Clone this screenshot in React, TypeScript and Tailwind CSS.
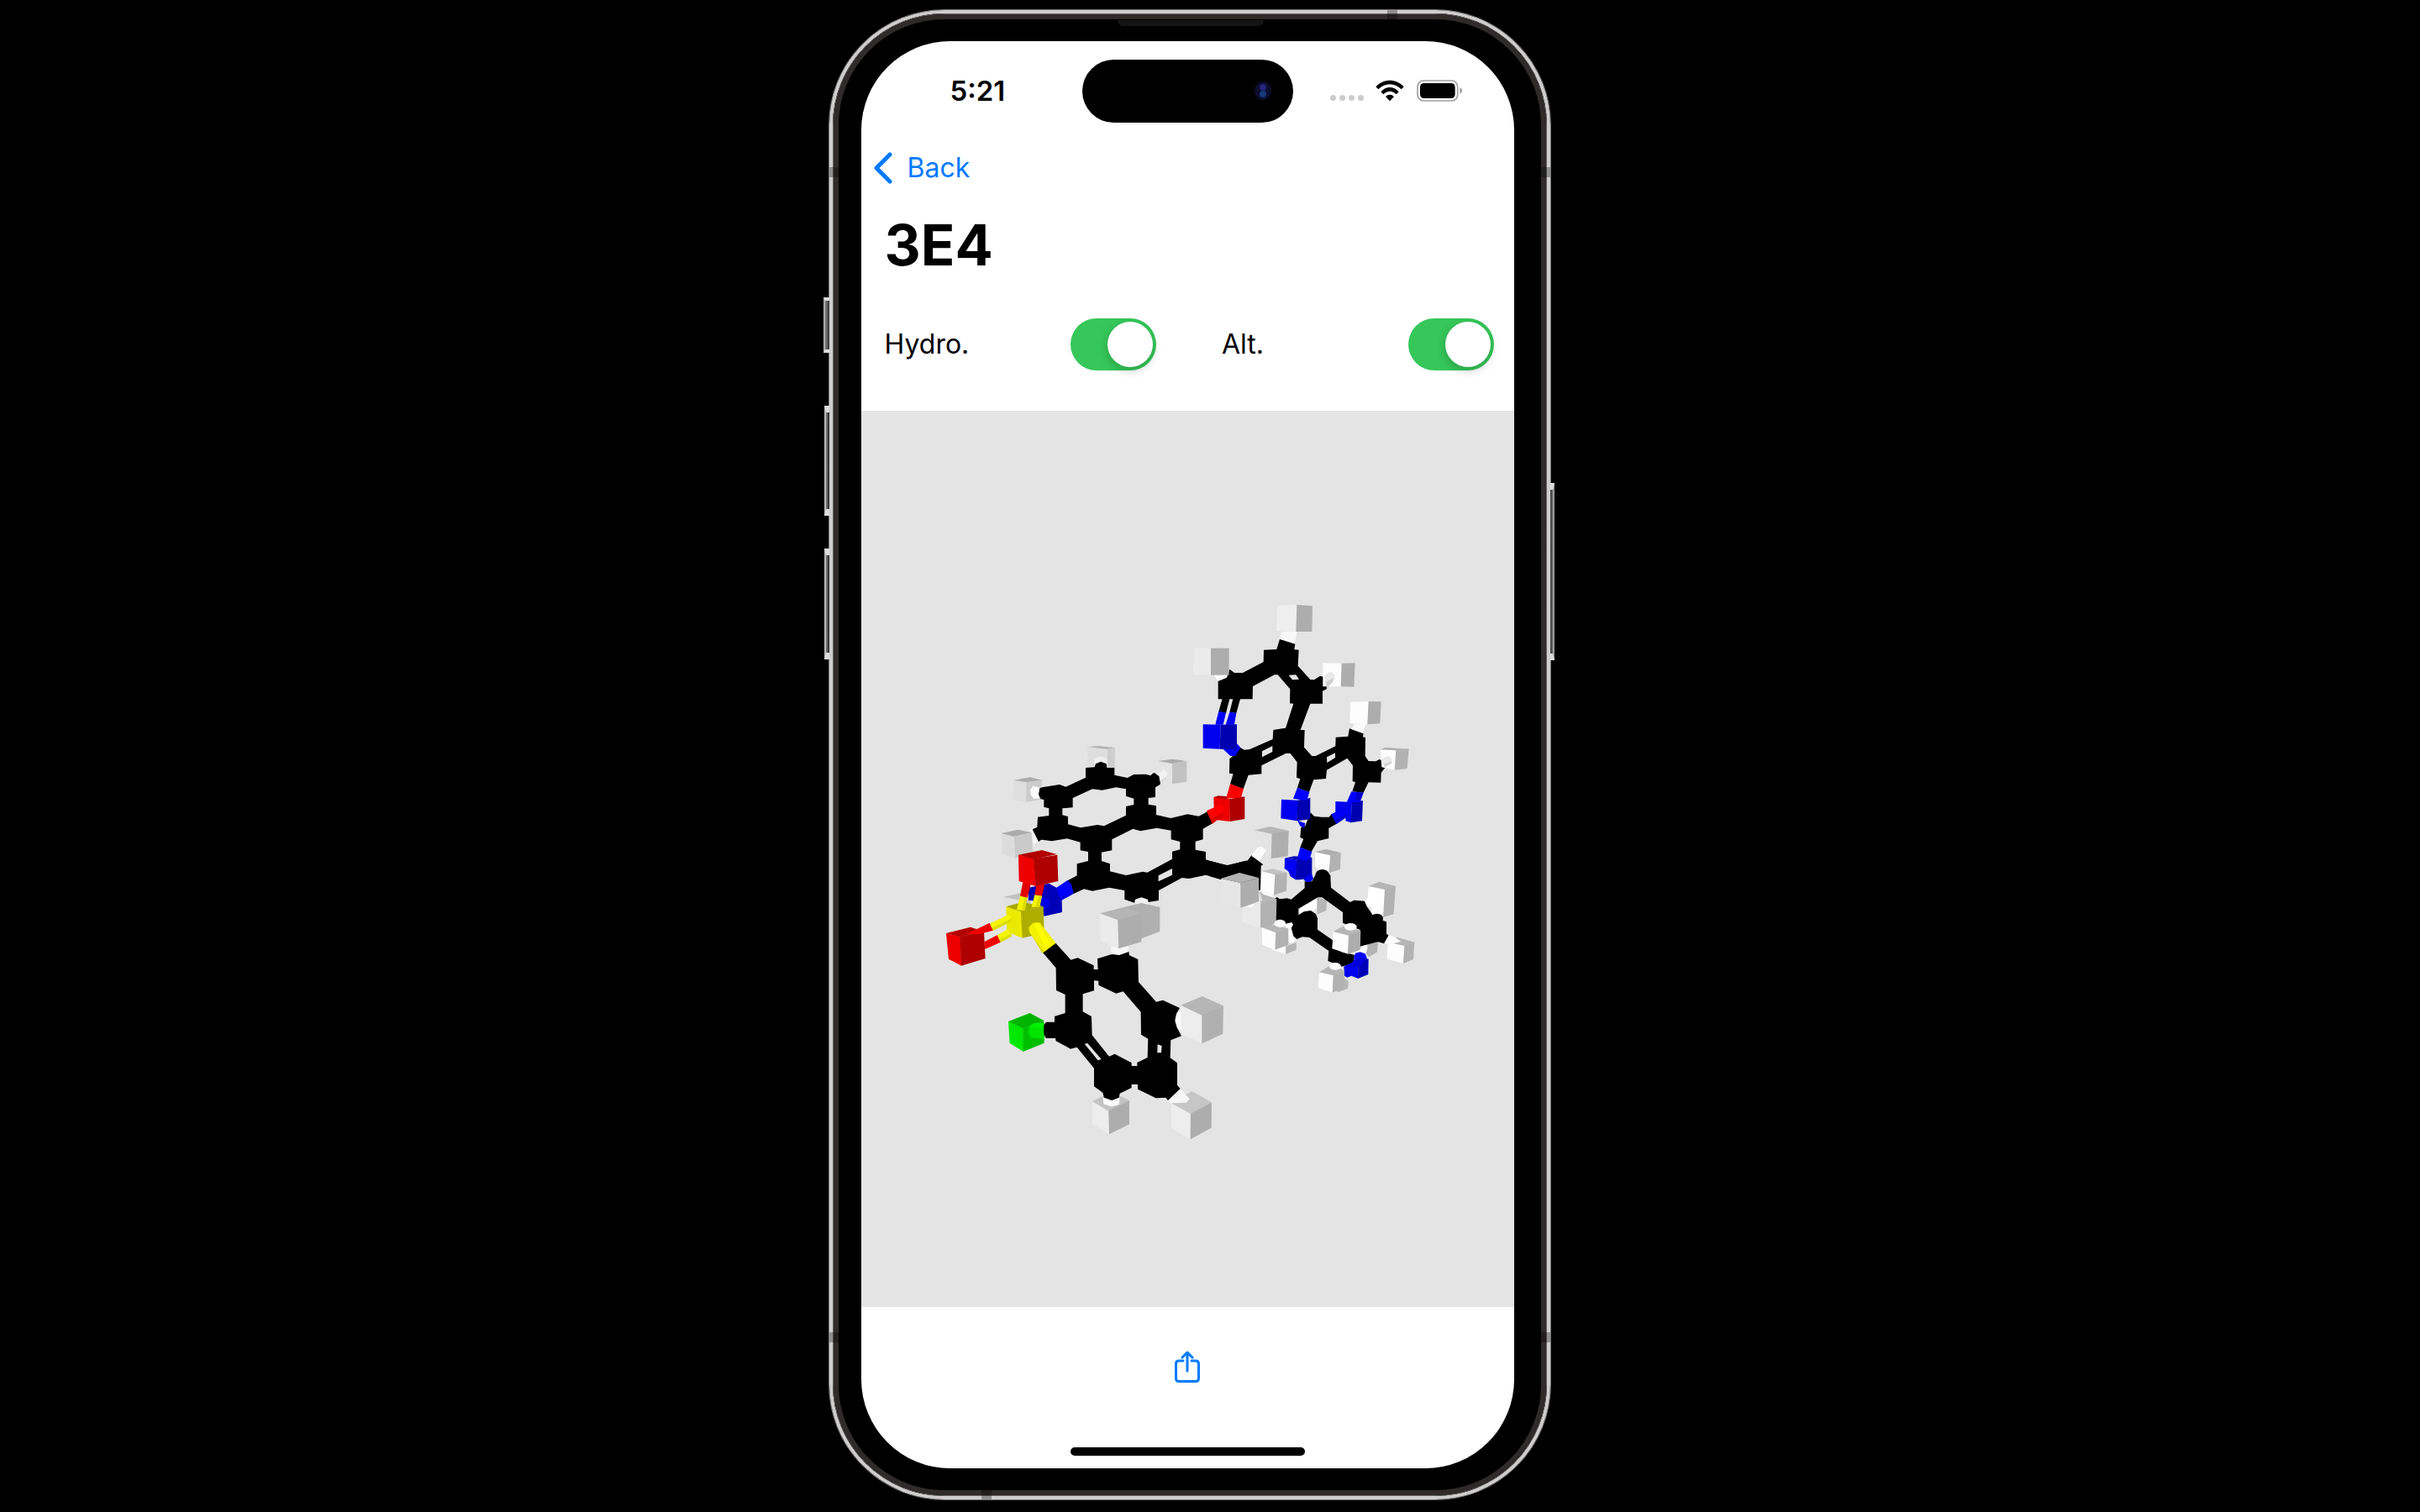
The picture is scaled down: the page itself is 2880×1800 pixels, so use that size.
import React from "react";

type Shape = [fill: string, points: string];
type Dot = [fill: string, cx: number, cy: number, rx: number, ry: number];

const K = "#000000";
const BG = "#e4e4e4";
const W = "#fbfbfb";

/* Pyridine and pyrimidine rings */
const upperRings: Shape[] = [
  ["#efefef", "360,64 432,60 427,156 357,154"],
  ["#adadad", "430,60 486,64 484,156 427,156"],
  ["#f8f8f8", "376,156 431,156 422,200 369,184"],
  [W, "133,310 190,290 188,320 165,334 145,328"],
  [K, "369,183 424,200 421,220 437,221 434,278 478,327 492,328 513,314 528,318 538,340 537,360 522,368 522,413 478,413 443,507 458,507 456,569 484,600 497,600 568,565 569,533 613,530 618,502 668,520 666,532 675,534 674,600 686,618 712,619 725,612 742,620 747,640 735,655 731,660 730,695 686,694 668,731 628,727 639,694 629,690 630,634 610,608 537,650 534,681 490,685 474,729 432,713 442,682 429,677 431,622 407,591 392,590 304,634 304,664 257,668 239,718 192,700 203,664 189,662 190,610 202,600 228,570 243,578 262,576 344,540 346,507 390,500 418,413 405,412 406,361 362,310 350,310 273,351 272,397 149,397 149,333 180,320 190,290 207,303 237,303 311,264 312,221 358,219"],
  [BG, "401,311 427,310 438,326 414,328"],
  [BG, "306,583 343,564 343,585 306,604"],
  [BG, "537,604 567,589 567,606 538,624"],
  [K, "164,396 190,396 177,447 151,441"],
  [K, "202,396 228,396 214,447 190,443"],
  ["#0000ff", "151,440 177,446 167,488 139,488"],
  ["#0000ff", "190,443 214,446 207,488 176,488"],
  ["#0000ff", "165,574 212,574 217,556 229,570 210,600 193,600"],
  ["#0000ee", "95,487 158,488 155,575 95,572"],
  ["#0000b0", "158,488 216,487 216,578 155,575"],
  ["#ebebeb", "62,215 124,215 124,311 59,309"],
  ["#adadad", "123,215 188,215 188,311 123,311"],
  ["#fcfcfc", "523,268 591,269 588,352 523,352"],
  ["#adadad", "590,269 638,268 634,353 587,352"],
  ["#e9e9e9", "526,316 545,300 558,302 566,312 560,332 538,360"],
  ["#cfcfcf", "533,336 563,320 560,332 538,358"],
  [W, "635,485 676,485 665,518 627,505"],
  ["#fdfdfd", "621,407 687,405 683,487 619,483"],
  ["#adadad", "686,405 731,406 727,484 682,487"],
  ["#fdfdfd", "729,577 785,578 780,650 733,640"],
  ["#adadad", "729,577 745,570 829,575 784,580"],
  ["#b2b2b2", "784,580 830,574 824,645 779,650"],
  ["#e9e9e9", "731,612 758,599 770,612 768,625 744,640"],
  ["#cfcfcf", "741,630 769,618 768,626 744,640"],
  ["#ee0000", "133,747 192,752 191,834 135,827"],
  ["#ae0000", "133,747 150,742 185,745 180,755"],
  ["#ff0000", "192,700 240,717 230,752 178,750"],
  ["#ae0000", "190,754 244,745 244,825 191,834"],
  ["#ff0000", "108,796 158,773 172,785 168,810 128,842"],
  ["#d80000", "123,826 170,800 168,812 128,842"],
  ["#0000ff", "571,843 553,808 600,785 612,815"],
  ["#0000ee", "375,755 433,758 431,832 373,823"],
  ["#0000b0", "432,758 478,750 478,826 430,832"],
  ["#0000ff", "432,713 475,729 466,760 417,752"],
  ["#0000ee", "568,762 627,765 624,838 604,832 606,800 568,806"],
  ["#0000b0", "627,762 666,760 663,832 623,838"],
  ["#0000ff", "625,727 668,731 656,765 608,766"],
  ["#0000c8", "645,730 668,731 656,758 638,758"],
  ["#0000d0", "565,830 606,806 608,818 571,843"],
];

/* Naphthalene core and the sulfonyl group */
const coreBack: Dot[] = [["#eeeeee", 390, 112, 24, 20]];
const coreShapesBack: Shape[] = [
  ["#dedede", "343,61 415,66 415,132 343,132"],
  ["#b2b2b2", "343,58 380,54 441,60 415,66"],
  ["#cecece", "414,65 441,60 440,135 414,135"],
];
const core: Shape[] = [
  [K, "336,132 368,130 372,118 390,110 410,118 412,132 439,132 439,158 485,168 508,156 550,155 568,160 580,150 600,162 602,192 585,200 585,237 560,240 560,263 588,268 588,300 640,312 700,298 740,305 772,288 790,330 755,350 755,388 728,395 728,425 765,432 765,460 840,482 905,465 905,530 820,530 765,515 705,528 680,525 597,570 597,606 520,618 475,602 475,570 420,560 360,572 330,565 293,582 272,535 305,517 305,475 345,465 345,432 317,427 317,398 270,385 215,394 170,388 168,395 145,352 163,345 165,308 205,303 205,277 187,272 187,245 172,240 172,205 190,200 243,192 265,200 336,167"],
  [BG, "290,240 360,208 395,212 445,202 480,208 480,233 508,242 508,264 480,270 480,302 402,340 378,336 318,346 273,334 273,306 253,301 253,277 290,274"],
  [BG, "430,388 505,350 532,358 590,347 641,356 641,388 673,396 673,424 645,431 645,458 556,506 540,503 480,516 423,502 423,475 393,465 393,434 430,427"],
  [BG, "596,517 645,492 645,515 596,538"],
  ["#dedede", "80,176 126,183 124,254 78,247"],
  ["#ababab", "80,176 138,166 180,176 125,184"],
  ["#cccccc", "125,183 180,176 178,245 123,254"],
  [W, "138,212 148,197 175,203 170,242 150,242 140,228"],
  [K, "172,205 190,200 190,246 176,244 168,228"],
  ["#dcdcdc", "35,366 81,377 86,455 38,440"],
  ["#ababab", "35,366 95,353 143,364 80,378"],
  ["#cacaca", "80,377 143,364 147,435 85,455"],
  ["#f4f4f4", "131,354 150,348 168,395 149,407 144,364"],
  [K, "146,352 165,345 190,380 168,396"],
  ["#e4e4e4", "595,110 646,116 646,190 600,184"],
  ["#ababab", "595,108 645,101 697,108 645,117"],
  ["#c2c2c2", "645,117 697,108 697,182 645,190"],
  ["#f2f2f2", "585,158 618,138 628,150 626,168 602,192"],
  ["#dcdcdc", "598,182 628,160 624,172 602,192"],
  [K, "568,160 580,150 598,162 603,190 585,202"],
  ["#c2c2c2", "42,593 110,578 140,590 140,630 60,625"],
  ["#e2e2e2", "42,593 100,605 100,625 56,626"],
  ["#0000b8", "132,560 205,545 232,560 250,565 252,648 188,662 170,610 132,605"],
  ["#0000ff", "232,560 272,533 285,548 293,580 247,607"],
  ["#0000e0", "247,595 290,572 293,582 247,607"],
  ["#0000e6", "178,595 196,597 208,608 205,628 188,636 178,628"],
  ["#e00000", "112,540 140,548 128,597 102,590"],
  ["#e00000", "160,553 190,546 180,590 154,586"],
  ["#ee0000", "96,443 151,457 159,555 98,537"],
  ["#b00000", "96,443 180,426 233,441 150,458"],
  ["#ae0000", "150,457 235,443 238,537 158,555"],
  ["#eaea00", "52,628 106,645 111,740 55,718"],
  ["#a8a800", "52,628 110,612 185,627 105,646"],
  ["#adad00", "105,645 185,627 188,722 110,740"],
  ["#f4f400", "102,590 128,596 118,642 90,640"],
  ["#dcdc00", "118,594 128,596 120,640 108,641"],
  ["#f4f400", "154,586 180,590 172,628 143,630"],
  ["#dcdc00", "168,588 180,590 172,628 158,630"],
];

/* Fluorophenyl ring */
const phenylBack: Dot[] = [[W, 885, 705, 20, 33]];
const phenyl: Shape[] = [
  ["#f4f400", "205,358 275,325 284,348 215,384"],
  ["#dddd00", "211,374 282,340 284,350 215,384"],
  ["#f4f400", "230,400 270,378 282,402 242,425"],
  ["#dddd00", "238,416 280,396 282,404 242,425"],
  ["#ee0000", "48,393 98,405 103,509 57,485"],
  ["#b40000", "48,393 135,371 183,387 97,406"],
  ["#ae0000", "97,405 183,387 188,483 102,509"],
  ["#f00000", "122,395 203,356 215,383 165,397"],
  ["#f00000", "184,424 230,400 242,425 187,450"],
  ["#ededed", "569,993 629,1027 630,1111 570,1075"],
  ["#c4c4c4", "569,993 640,960 702,990 628,1028"],
  ["#adadad", "628,1027 702,990 702,1075 630,1111"],
  [W, "608,980 668,980 665,1005 638,1012 610,1003"],
  ["#ededed", "852,1000 922,1037 920,1129 852,1088"],
  ["#c6c6c6", "852,1000 925,957 996,997 921,1038"],
  ["#adadad", "921,1037 996,997 995,1088 920,1129"],
  ["#f6f6f6", "840,990 880,945 918,985 905,998 850,1000"],
  [K, "437,426 493,488 518,481 575,508 575,522 590,522 588,484 632,470 640,468 665,471 700,458 702,472 733,486 735,567 798,638 822,632 882,660 870,680 865,705 872,730 888,760 850,775 848,838 873,856 873,935 884,948 840,990 832,980 797,982 732,950 732,933 710,933 710,945 668,965 665,980 640,990 612,980 607,962 576,940 576,875 515,800 492,806 440,778 438,768 405,768 393,750 393,725 405,710 435,710 435,690 473,678 473,612 441,597 440,517 393,462"],
  [BG, "576,562 592,563 592,578 655,608 680,601 743,674 744,755 769,770 767,837 730,855 730,867 710,867 710,856 650,824 630,833 569,757 567,690 536,673 536,610 576,598"],
  [BG, "542,788 553,786 602,843 590,847"],
  [BG, "803,790 818,795 816,820 802,820"],
  ["#f2f200", "343,372 358,356 382,355 440,428 392,464 345,388"],
  ["#fdfd00", "362,358 376,355 420,432 404,450"],
  ["#d6d600", "343,380 350,392 396,458 392,464"],
  ["#f6f6f6", "636,440 698,440 698,460 665,471 638,462"],
  ["#f0f0f0", "720,286 723,272 745,265 768,272 772,290 745,296"],
  ["#b0b0b0", "683,300 745,285 811,300 811,387 745,412"],
  ["#ebebeb", "597,322 662,345 665,448 598,420"],
  ["#b5b5b5", "597,322 683,300 747,322 661,346"],
  ["#adadad", "661,345 745,322 745,424 664,448"],
  ["#ededed", "886,650 962,685 961,787 886,750"],
  ["#b6b6b6", "886,650 962,618 1038,652 961,686"],
  ["#b0b0b0", "961,685 1038,652 1036,752 961,787"],
  ["#00e800", "270,708 323,732 324,816 275,785"],
  ["#00b400", "270,708 347,678 397,705 322,733"],
  ["#00be00", "322,732 397,705 398,785 323,816"],
  ["#00e400", "340,745 348,722 365,714 397,714 394,740 400,772 350,766"],
  ["#00f400", "346,726 364,714 397,714 394,732"],
];

/* Aminopiperidine ring and the methyl group */
const lowerBack: Shape[] = [
  ["#fdfdfd", "185,232 233,243 229,317 180,300"],
  ["#c2c2c2", "185,232 222,223 275,236 232,244"],
  ["#b2b2b2", "232,243 275,236 273,302 228,317"],
  [K, "0,195 62,210 135,193 148,175 190,208 182,212 180,300 170,300 0,250"],
  ["#e4e4e4", "158,85 222,97 219,186 155,172"],
  ["#b6b6b6", "158,85 215,72 281,87 221,98"],
  ["#aeaeae", "221,97 281,87 278,178 218,186"],
  [W, "148,177 168,148 182,143 196,152 200,160 187,202 176,196"],
  ["#e0e0e0", "176,194 198,162 200,168 187,202"],
  ["#ffffff", "315,375 335,352 360,345 372,328 384,330 383,362 360,378 350,372 330,387"],
  ["#b6b6b6", "382,325 417,335 415,372 382,386"],
  ["#fdfdfd", "525,520 560,488 572,530"],
  ["#b4b4b4", "562,488 600,487 597,520 568,538 556,524 562,510"],
  ["#fdfdfd", "222,512 236,500 270,490 271,528"],
  ["#b6b6b6", "270,500 308,485 308,512 270,528"],
  ["#fdfdfd", "375,163 431,174 426,238 376,215"],
  ["#adadad", "375,163 415,153 467,165 430,175"],
  ["#b2b2b2", "430,174 467,165 465,225 424,238"],
  ["#ffffff", "566,285 625,296 619,396 590,372 550,345 552,335 563,330"],
  ["#b6b6b6", "566,285 605,269 663,285 624,297"],
  ["#b2b2b2", "624,296 663,284 656,385 618,396"],
];
const lower: Shape[] = [
  [K, "359,22 372,35 398,38 425,38 435,26 452,62 424,78 424,114 384,124 362,162 322,146 334,116 322,111 325,75 340,70"],
  ["#0000e8", "312,50 340,60 336,78 322,70"],
  [K, "338,268 364,268 380,238 388,228 412,226 430,246 432,290 500,342 515,335 552,338 560,358 572,374 580,388 610,385 618,408 630,412 630,455 640,462 622,490 600,484 575,490 535,500 535,440 474,416 474,378 400,325 385,325 316,365 316,390 290,425 235,410 230,330 240,324 248,331 275,328 290,332 338,292"],
  [K, "316,388 335,376 360,372 378,385 384,400 384,440 436,476 470,520 515,530 514,560 470,572 421,552 424,516 355,468 330,466 310,474 292,458 290,420"],
  ["#0000ee", "267,185 311,190 306,262 287,250 280,232 266,222"],
  ["#0000b4", "267,185 300,178 364,182 364,255 320,262 305,262 310,190"],
  ["#0000ff", "322,146 364,162 356,188 335,194 312,184"],
  ["#0000f0", "334,262 345,248 364,242 369,258 360,269 345,270"],
  ["#fdfdfd", "635,485 695,497 691,561 632,545"],
  ["#b6b6b6", "635,485 668,467 730,485 694,498"],
  ["#b2b2b2", "694,497 730,484 726,546 690,561"],
  [W, "638,460 658,466 682,482 640,494 622,488"],
  ["#0000ee", "478,572 512,555 530,560 529,615 505,605 490,611 480,605"],
  ["#0000b8", "530,556 550,540 566,545 565,600 528,615"],
  ["#0000ff", "514,535 520,524 536,520 554,526 560,540 540,552 516,558"],
  ["#0000d8", "512,550 560,540 540,566 530,572 500,575"],
  ["#e6e6e6", "40,257 110,273 110,362 42,340"],
  ["#b2b2b2", "40,257 105,237 174,255 109,274"],
  ["#adadad", "109,273 174,255 174,340 109,362"],
  ["#eaeaea", "115,362 174,340 181,346 180,434 115,413"],
  ["#b2b2b2", "180,347 238,330 236,418 180,434"],
  ["#b8b8b8", "175,305 200,310 238,332 182,348"],
  [W, "176,298 196,304 222,316 228,326 190,314"],
  ["#e0e0e0", "172,308 180,312 188,338 178,336"],
  [W, "136,356 158,348 152,361 142,362"],
  ["#ffffff", "266,420 292,414 297,422 290,435 300,470 307,476 296,488 280,486"],
  ["#fdfdfd", "185,432 236,450 233,512 187,495"],
  ["#b6b6b6", "185,432 215,422 280,435 235,451"],
  ["#b2b2b2", "235,450 280,435 280,495 232,512"],
  ["#fdfdfd", "440,447 496,460 493,527 436,508"],
  ["#b6b6b6", "440,447 475,428 538,443 495,461"],
  ["#adadad", "495,460 538,443 536,512 492,527"],
  ["#b6b6b6", "478,612 495,625 492,650 460,663 445,658"],
  ["#fdfdfd", "390,592 441,603 438,665 386,648"],
  ["#b6b6b6", "390,592 430,568 480,585 440,604"],
  ["#b2b2b2", "440,603 480,585 477,648 437,665"],
];
const lowerDots: Dot[] = [
  [W, 598, 372, 22, 18],
  [K, 596, 400, 22, 17],
  [W, 404, 222, 20, 20],
  [K, 401, 243, 24, 18],
  [W, 250, 418, 20, 14],
  [W, 502, 430, 22, 13],
  [W, 447, 571, 21, 13],
  ["#0000ff", 285, 216, 14, 15],
];

function Shapes({ items }: { items: Shape[] }) {
  return (
    <>
      {items.map(([fill, points], i) => (
        <polygon key={i} fill={fill} points={points} />
      ))}
    </>
  );
}

function Dots({ items }: { items: Dot[] }) {
  return (
    <>
      {items.map(([fill, cx, cy, rx, ry], i) => (
        <ellipse key={i} fill={fill} cx={cx} cy={cy} rx={rx} ry={ry} />
      ))}
    </>
  );
}

function Molecule() {
  return (
    <svg
      viewBox="1025 489 777 1067"
      className="h-full w-full"
      role="img"
      aria-label="Ball and stick model of ligand 3E4"
    >
      <g transform="translate(1440 960) scale(0.3333)">
        <Shapes items={lowerBack} />
      </g>
      <g transform="translate(1180 870) scale(0.3333)">
        <Shapes items={coreShapesBack} />
        <Dots items={coreBack} />
        <Shapes items={core} />
      </g>
      <g transform="translate(1440 960) scale(0.3333)">
        <Shapes items={lower} />
        <Dots items={lowerDots} />
      </g>
      <g transform="translate(1400 700) scale(0.3333)">
        <Shapes items={upperRings} />
      </g>
      <g transform="translate(1110 980) scale(0.3333)">
        <Dots items={phenylBack} />
        <Shapes items={phenyl} />
      </g>
    </svg>
  );
}

function StatusBar() {
  return (
    <header className="grid h-[118px] shrink-0 grid-cols-[1fr_251px_1fr] items-center">
      <time className="pl-[106px] text-[33px] leading-10 font-semibold">5:21</time>
      <div className="flex h-[75px] items-center justify-end rounded-full bg-black pr-[26px]">
        <svg width="20" height="24" viewBox="0 0 20 24" aria-hidden="true">
          <ellipse cx="10" cy="12" rx="10" ry="11" fill="#0b0d2e" />
          <ellipse cx="10" cy="8" rx="4" ry="4" fill="#25247a" />
          <ellipse cx="10" cy="16" rx="4" ry="4" fill="#143a78" />
        </svg>
      </div>
      <div className="flex items-center pl-[44px]">
        <div className="mt-4 flex gap-1" aria-hidden="true">
          <span className="size-[7px] rounded-sm bg-[#cccccc]" />
          <span className="size-[7px] rounded-sm bg-[#cccccc]" />
          <span className="size-[7px] rounded-sm bg-[#cccccc]" />
          <span className="size-[7px] rounded-sm bg-[#cccccc]" />
        </div>
        <svg className="ml-[14px]" width="34" height="26" viewBox="0 0 102 78" role="img" aria-label="Wi-Fi">
          <path d="M1 25 C28 -5 74 -5 101 25 L92 34 C69 10 33 10 10 34 Z" />
          <path d="M19 43 C37 22 65 22 83 43 L74 52 C60 38 42 38 28 52 Z" />
          <path d="M36 60 C45 51 57 51 66 60 L51 76 Z" />
        </svg>
        <svg className="ml-[15px]" width="55" height="26" viewBox="0 0 165 78" role="img" aria-label="Battery full">
          <rect x="3" y="3" width="143" height="72" rx="21" fill="none" stroke="#a0a0a0" strokeWidth="5" />
          <rect x="12" y="12" width="125" height="54" rx="14" />
          <path d="M154 28 C165 32 165 46 154 50 Z" fill="#a0a0a0" />
        </svg>
      </div>
    </header>
  );
}

function Toggle({ label }: { label: string }) {
  return (
    <label className="flex flex-1 items-center justify-between text-[32px] leading-10">
      {label}
      <input
        type="checkbox"
        role="switch"
        defaultChecked
        className="flex h-[62px] w-[102px] appearance-none items-center rounded-full bg-[#e9e9eb] p-1 before:size-[54px] before:rounded-full before:bg-white before:shadow-[0_4px_12px_rgba(0,0,0,0.2)] before:content-[''] checked:justify-end checked:bg-[#35c759]"
      />
    </label>
  );
}

function HardwareButtons() {
  return (
    <div aria-hidden="true">
      <div className="absolute top-[342px] -left-[7px] h-[66px] w-[7px] border-y-4 border-l-2 border-y-[#dddddd] border-l-[#a8a8a8] bg-linear-to-r from-[#888888] to-[#333333]" />
      <div className="absolute top-[471px] -left-[6px] h-[131px] w-[6px] border-y-8 border-l-2 border-y-[#dddddd] border-l-[#b5b5b5] bg-linear-to-r from-[#888888] to-[#222222]" />
      <div className="absolute top-[641px] -left-[6px] h-[132px] w-[6px] border-y-8 border-l-2 border-y-[#dddddd] border-l-[#b5b5b5] bg-linear-to-r from-[#888888] to-[#222222]" />
      <div className="absolute top-[563px] -right-[5px] h-[211px] w-[5px] border-y-8 border-r-2 border-y-[#dddddd] border-r-[#999999] bg-linear-to-r from-[#333333] to-[#777777]" />
      <div className="absolute top-[187px] left-0 h-3 w-3 bg-black/30" />
      <div className="absolute top-[187px] right-0 h-3 w-3 bg-black/30" />
      <div className="absolute bottom-[187px] left-0 h-3 w-3 bg-black/30" />
      <div className="absolute right-0 bottom-[187px] h-3 w-3 bg-black/30" />
      <div className="absolute top-0 right-[182px] h-3 w-3 bg-black/30" />
      <div className="absolute bottom-0 left-[181px] h-3 w-3 bg-black/30" />
      <div className="absolute top-3 left-[343px] h-[7px] w-[174px] rounded-b-lg bg-[#151515]" />
    </div>
  );
}

export default function App() {
  return (
    <main className="flex min-h-screen justify-center bg-black pt-[11px] pr-[49px] pb-[14px] font-['Inter',sans-serif] text-black">
      <div className="relative flex w-full max-w-[860px] rounded-[138px] border border-[#767575]">
        <div className="flex w-full rounded-[137px] border-4 border-[#cfcdcd]">
          <div className="flex w-full rounded-[133px] border border-[#6a6868]">
            <div className="flex w-full rounded-[132px] border-6 border-[#2e2b2a] bg-black pt-[26px] pr-[32px] pb-[26px] pl-[27px]">
              <div className="flex w-full flex-col overflow-hidden rounded-[106px] bg-white">
                <StatusBar />
                <nav className="flex h-[66px] shrink-0 items-center pl-[15px]">
                  <button type="button" className="flex items-center gap-[18px] text-[32px] leading-10 text-[#007aff]">
                    <svg width="22" height="38" viewBox="0 0 22 38" fill="none" stroke="currentColor" strokeWidth="5" strokeLinecap="round" strokeLinejoin="round" aria-hidden="true">
                      <path d="M19 3 L3 19 L19 35" />
                    </svg>
                    Back
                  </button>
                </nav>
                <h1 className="mt-[19px] pl-7 text-[67px] leading-20 font-bold">3E4</h1>
                <div className="flex gap-[78px] pt-[47px] pr-6 pb-12 pl-7">
                  <Toggle label="Hydro." />
                  <Toggle label="Alt." />
                </div>
                <section className="min-h-0 flex-1 basis-0 bg-[#e4e4e4]">
                  <Molecule />
                </section>
                <footer className="flex h-[192px] shrink-0 flex-col items-center justify-between pt-[52px] pb-[15px]">
                  <button type="button" aria-label="Share" className="text-[#007aff]">
                    <svg width="30" height="38" viewBox="0 0 30 38" fill="none" stroke="currentColor" strokeWidth="3" strokeLinecap="round" strokeLinejoin="round">
                      <path d="M10 12 H5 Q1.5 12 1.5 15.5 V33 Q1.5 36.5 5 36.5 H25 Q28.5 36.5 28.5 33 V15.5 Q28.5 12 25 12 H20" />
                      <path d="M15 24 V2 M9 8 L15 2 L21 8" />
                    </svg>
                  </button>
                  <div className="h-[10px] w-[279px] rounded-full bg-black" />
                </footer>
              </div>
            </div>
          </div>
        </div>
        <HardwareButtons />
      </div>
    </main>
  );
}
